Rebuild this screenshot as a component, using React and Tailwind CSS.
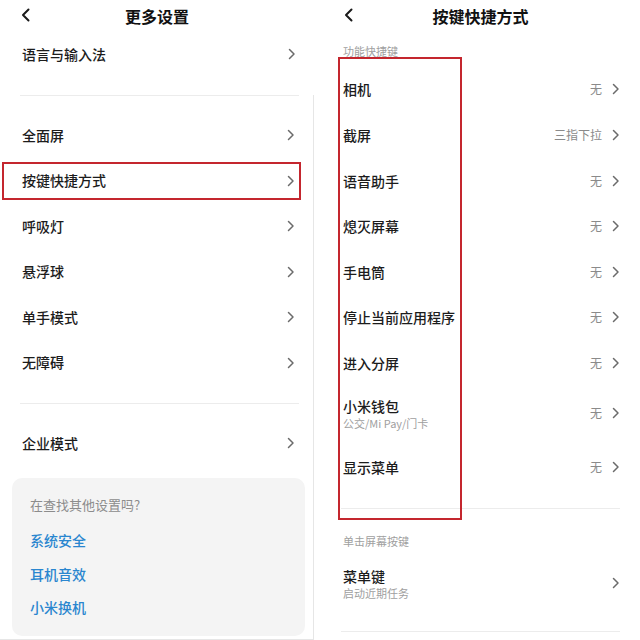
import React from "react";

const font = { fontFamily: '"Noto Sans CJK SC", "Noto Sans", sans-serif' };

function Chevron({ className = "" }) {
  return (
    <svg width="8" height="12" viewBox="0 0 8 12" className={className}>
      <path d="M1.5 1.5 L6 6 L1.5 10.5" fill="none" stroke="#6b6b6b" strokeWidth="1.5" strokeLinecap="round" strokeLinejoin="round" />
    </svg>
  );
}

function Back() {
  return (
    <svg width="12" height="14" viewBox="0 0 12 14">
      <path d="M8.5 1.5 L3 7 L8.5 12.5" fill="none" stroke="#1a1a1a" strokeWidth="2" strokeLinecap="round" strokeLinejoin="round" />
    </svg>
  );
}

function LeftRow({ label, h = "h-[46px]", boxed = false }) {
  return (
    <div className={"relative flex items-center justify-between pl-[22px] pr-[18px] " + h}>
      <span className="text-[14px] font-medium text-[#1c1c1c]">{label}</span>
      <Chevron />
      {boxed && <div className="absolute left-[2px] right-[12px] top-[4px] bottom-[4px] border-2 border-[#c4262e]" />}
    </div>
  );
}

function RightRow({ label, sub, value = "无", h = "h-[46px]" }) {
  return (
    <div className={"flex items-center justify-between pl-[22px] pr-[20px] " + h}>
      <div className="flex flex-col">
        <span className="text-[14px] font-medium text-[#1c1c1c] leading-[20px]">{label}</span>
        {sub && <span className="text-[11px] text-[#a0a0a0] leading-[14px]">{sub}</span>}
      </div>
      <div className="flex items-center gap-[10px]">
        {value && <span className="text-[12px] text-[#8a8a8a]">{value}</span>}
        <Chevron />
      </div>
    </div>
  );
}

export default function App() {
  return (
    <div className="w-[640px] h-[640px] bg-white flex overflow-hidden" style={font}>
      {/* Left */}
      <div className="w-[314px] flex flex-col">
        <div className="relative h-[31px] flex items-center justify-center">
          <div className="absolute left-[20px] top-[8px]"><Back /></div>
          <span className="text-[16px] font-bold text-[#111]">更多设置</span>
        </div>
        <LeftRow label="语言与输入法" />
        <div className="h-[18px]" />
        <div className="flex-1 flex flex-col border-r border-b border-[#e6e6e6]">
          <div className="mx-[20px] mr-[14px] h-px bg-[#ececec]" />
          <div className="h-[16px]" />
          <LeftRow label="全面屏" />
          <LeftRow label="按键快捷方式" h="h-[45.5px]" boxed />
          <LeftRow label="呼吸灯" h="h-[45.5px]" />
          <LeftRow label="悬浮球" h="h-[45.5px]" />
          <LeftRow label="单手模式" h="h-[45.5px]" />
          <LeftRow label="无障碍" h="h-[45.5px]" />
          <div className="h-[17px]" />
          <div className="mx-[20px] mr-[14px] h-px bg-[#ececec]" />
          <div className="h-[16px]" />
          <LeftRow label="企业模式" h="h-[47px]" />
          <div className="h-[11px]" />
          <div className="mx-[12px] mr-[8px] mb-[3px] flex-1 rounded-[10px] bg-[#f4f4f4] px-[18px] pt-[16px] flex flex-col">
            <span className="text-[13px] text-[#8c8c8c] h-[22px] leading-[22px]">在查找其他设置吗?</span>
            <div className="h-[13px]" />
            <span className="text-[14px] font-medium text-[#2a86cf] h-[22px] leading-[22px]">系统安全</span>
            <div className="h-[12px]" />
            <span className="text-[14px] font-medium text-[#2a86cf] h-[22px] leading-[22px]">耳机音效</span>
            <div className="h-[11px]" />
            <span className="text-[14px] font-medium text-[#2a86cf] h-[22px] leading-[22px]">小米换机</span>
          </div>
        </div>
      </div>

      {/* Right */}
      <div className="relative flex-1 flex flex-col ml-[7px]">
        <div className="relative h-[31px] flex items-center justify-center">
          <div className="absolute left-[22px] top-[8px]"><Back /></div>
          <span className="text-[16px] font-bold text-[#111]">按键快捷方式</span>
        </div>
        <div className="h-[35px] pl-[22px] pt-[12px] flex items-start">
          <span className="text-[11px] text-[#a0a0a0] leading-[16px]">功能快捷键</span>
        </div>
        <RightRow label="相机" />
        <RightRow label="截屏" value="三指下拉" />
        <RightRow label="语音助手" h="h-[45.5px]" />
        <RightRow label="熄灭屏幕" h="h-[45.5px]" />
        <RightRow label="手电筒" h="h-[45.5px]" />
        <RightRow label="停止当前应用程序" h="h-[45.5px]" />
        <RightRow label="进入分屏" h="h-[45.5px]" />
        <RightRow label="小米钱包" sub="公交/Mi Pay/门卡" h="h-[55px]" />
        <RightRow label="显示菜单" h="h-[52px]" />
        <div className="h-[15px]" />
        <div className="mx-[20px] h-px bg-[#ececec]" />
        <div className="h-[39px] pl-[22px] flex items-end">
          <span className="text-[11px] text-[#a0a0a0] leading-[14px]">单击屏幕按键</span>
        </div>
        <div className="h-[13px]" />
        <RightRow label="菜单键" sub="启动近期任务" value="" h="h-[44px]" />
        <div className="h-[26px]" />
        <div className="mx-[20px] h-px bg-[#ececec]" />
        <div className="absolute left-[17px] top-[57px] w-[124px] h-[463px] border-2 border-[#c4262e]" />
      </div>
    </div>
  );
}
